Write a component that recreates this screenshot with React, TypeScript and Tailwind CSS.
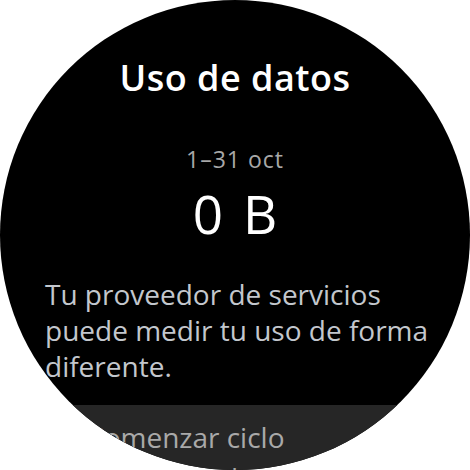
import React from "react";

export default function App() {
  return (
    <div className="w-[470px] h-[470px] bg-white" style={{ fontFamily: "'Open Sans', Roboto, sans-serif" }}>
      <div className="w-[470px] h-[470px] rounded-full bg-black overflow-hidden flex flex-col">
        <div className="pt-[57px] text-center text-white font-semibold text-[36px] leading-[42px] tracking-[0.5px]">
          Uso de datos
        </div>
        <div className="mt-[46px] text-center text-[#a8a8a8] text-[23px] leading-[28px] tracking-[1px]">
          1–31 oct
        </div>
        <div className="mt-[11px] text-center text-white text-[53px] leading-[60px] [word-spacing:6px]">
          0 B
        </div>
        <div className="mt-[32px] pl-[45px] pr-[35px] text-[#c3c7cd] text-[28px] leading-[36px]">
          Tu proveedor de servicios puede medir tu uso de forma diferente.
        </div>
        <div className="mt-[21px] bg-[#262626] pt-[14px] pl-[86px] pr-[40px] pb-[20px] text-[#a9a9a9] text-[28px] leading-[36px]">
          <div>Comenzar ciclo</div>
          <div className="mt-[5px]">de uso de datos</div>
        </div>
      </div>
    </div>
  );
}
